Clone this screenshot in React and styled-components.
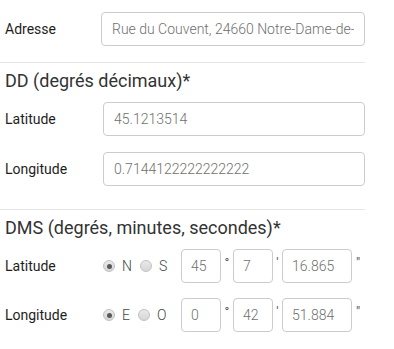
import React from "react";
import styled, { createGlobalStyle } from "styled-components";

const GlobalStyle = createGlobalStyle`
  body {
    margin: 0;
    background: #ffffff;
    font-family: Roboto, "Liberation Sans", sans-serif;
    color: #333333;
  }
`;

const Page = styled.div`
  width: 365px;
  padding: 12px 0 0 0;
`;

const Row = styled.div`
  display: flex;
  align-items: center;
  height: 34px;
  margin-bottom: ${props => props.gap ?? 16}px;
`;

const Label = styled.div`
  width: ${props => props.width || 98}px;
  padding-left: 5px;
  box-sizing: border-box;
  font-size: 14px;
  font-weight: 400;
  color: #1e1e1e;
  flex-shrink: 0;
`;

const TextInput = styled.input`
  flex: 1;
  height: 34px;
  box-sizing: border-box;
  border: 1px solid #cccccc;
  border-radius: 4px;
  padding: 0 10px;
  font-family: Roboto, "Liberation Sans", sans-serif;
  font-size: 14px;
  font-weight: 300;
  color: #6f6f6f;
  background: #fff;
  outline: none;
  min-width: 0;
`;

const Divider = styled.hr`
  border: 0;
  border-top: 1px solid #e5e5e5;
  margin: 0;
`;

const Heading = styled.h3`
  margin: 7px 0 10px 5px;
  font-size: 18px;
  font-weight: 400;
  color: #333333;
  line-height: 22px;
`;

const RadioGroup = styled.div`
  display: flex;
  align-items: center;
  width: 78px;
  flex-shrink: 0;
`;

const RadioItem = styled.label`
  display: flex;
  align-items: center;
  font-size: 14px;
  font-weight: 300;
  color: #444444;
  margin-right: 8px;
`;

const RadioDot = styled.span`
  width: 12px;
  height: 12px;
  border-radius: 50%;
  box-sizing: border-box;
  border: 1px solid #c2c2c2;
  background: linear-gradient(#e9e9e9, #d6d6d6);
  margin-right: 7px;
  position: relative;
  &::after {
    content: "";
    display: ${props => (props.checked ? "block" : "none")};
    position: absolute;
    left: 2.5px;
    top: 2.5px;
    width: 5px;
    height: 5px;
    border-radius: 50%;
    background: #5a5a5a;
  }
`;

const SmallInput = styled(TextInput)`
  flex: none;
  width: ${props => props.w}px;
  padding: 0 9px;
`;

const Unit = styled.span`
  width: ${props => props.w || 12}px;
  text-align: center;
  font-size: 13px;
  line-height: 13px;
  color: #555;
  align-self: flex-start;
  padding-top: 7px;
  flex-shrink: 0;
`;

function Radio({ label, checked }) {
  return (
    <RadioItem>
      <RadioDot checked={checked} />
      {label}
    </RadioItem>
  );
}

function DmsRow({ label, opts, values, last }) {
  return (
    <Row gap={last ? 0 : 15}>
      <Label width={103}>{label}</Label>
      <RadioGroup>
        <Radio label={opts[0]} checked />
        <Radio label={opts[1]} />
      </RadioGroup>
      <SmallInput w={40} defaultValue={values[0]} />
      <Unit w={12}>°</Unit>
      <SmallInput w={40} defaultValue={values[1]} />
      <Unit w={9}>'</Unit>
      <SmallInput w={70} defaultValue={values[2]} />
      <Unit w={12}>"</Unit>
    </Row>
  );
}

export default function App() {
  return (
    <Page>
      <GlobalStyle />
      <Row>
        <Label width={101}>Adresse</Label>
        <TextInput defaultValue="Rue du Couvent, 24660 Notre-Dame-de-Sanilhac" />
      </Row>
      <Divider />
      <Heading>DD (degrés décimaux)*</Heading>
      <Row>
        <Label width={103}>Latitude</Label>
        <TextInput defaultValue="45.1213514" />
      </Row>
      <Row gap={23}>
        <Label width={103}>Longitude</Label>
        <TextInput defaultValue="0.7144122222222222" />
      </Row>
      <Divider />
      <Heading>DMS (degrés, minutes, secondes)*</Heading>
      <DmsRow label="Latitude" opts={["N", "S"]} values={["45", "7", "16.865"]} />
      <DmsRow label="Longitude" opts={["E", "O"]} values={["0", "42", "51.884"]} last />
    </Page>
  );
}
